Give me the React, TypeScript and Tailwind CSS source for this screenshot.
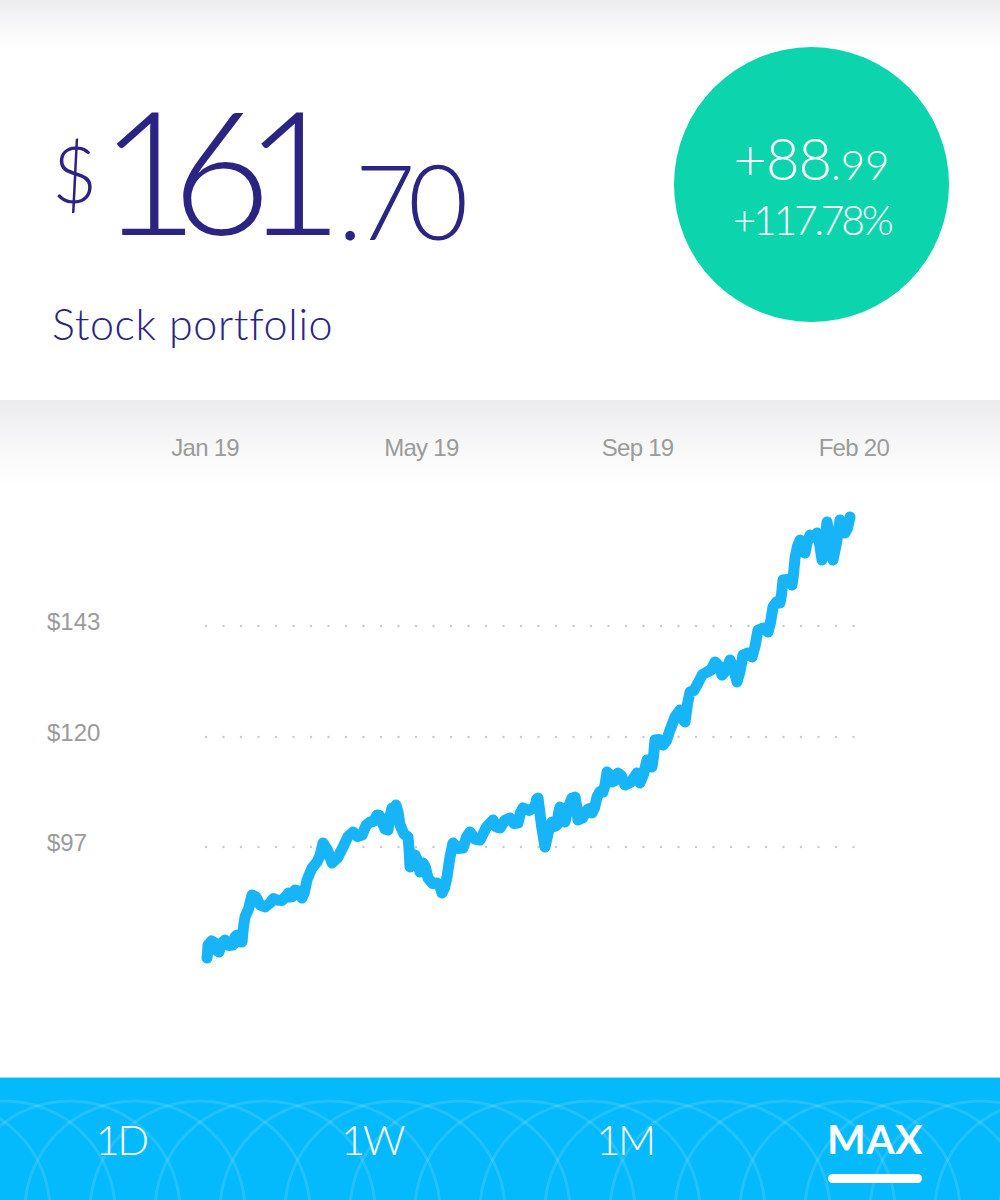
import React from "react";

const pts: [number, number][] = [
  [207, 958], [208, 945], [215, 943], [219, 952], [225, 940], [233, 945], [237, 935], [242, 942],
  [245, 917], [252, 895], [260, 905], [270, 903], [277, 900], [287, 895], [290, 897], [295, 890],
  [302, 898], [307, 880], [317, 862], [323, 843], [332, 863], [343, 847], [353, 832], [362, 835],
  [370, 822], [377, 815], [382, 822], [388, 830], [392, 808], [396, 805], [400, 825], [408, 837],
  [410, 867], [415, 855], [420, 872], [423, 863], [428, 878], [437, 883], [442, 893], [447, 877],
  [453, 843], [463, 848], [470, 832], [480, 840], [493, 820], [500, 828], [510, 818], [518, 823],
  [523, 808], [535, 807], [538, 798], [545, 847], [552, 822], [557, 825], [560, 807], [565, 822],
  [572, 798], [575, 797], [578, 820], [587, 810], [592, 813], [597, 797], [603, 792], [607, 772],
  [612, 782], [618, 773], [625, 785], [637, 773], [640, 783], [647, 760], [652, 767], [655, 740],
  [663, 745], [670, 730], [680, 710], [685, 722], [690, 692], [698, 683], [707, 672], [715, 662],
  [722, 675], [730, 660], [737, 682], [743, 655], [752, 657], [758, 630], [768, 632], [773, 607],
  [780, 603], [783, 580], [792, 585], [795, 558], [800, 540], [805, 553], [810, 535], [817, 533],
  [822, 560], [827, 522], [833, 560], [840, 520], [845, 533], [850, 517],
];

// small deterministic wiggle between traced points so the line looks noisy like the real one
function wiggly() {
  const out: string[] = [];
  pts.forEach(([x, y], i) => {
    out.push(`${x},${y}`);
    const next = pts[i + 1];
    if (!next) return;
    const mx = (x + next[0]) / 2;
    const my = (y + next[1]) / 2 + (i % 2 === 0 ? 3 : -3);
    out.push(`${mx},${my}`);
  });
  return out.join(" ");
}

const dates = ["Jan 19", "May 19", "Sep 19", "Feb 20"];
const levels = [
  { label: "$143", y: 626 },
  { label: "$120", y: 737 },
  { label: "$97", y: 847 },
];
const tabs = ["1D", "1W", "1M", "MAX"];

const geo = { fontFamily: "Lato, 'Open Sans', sans-serif" };
const sys = { fontFamily: "'Liberation Sans', Arial, sans-serif" };

export default function App() {
  return (
    <div className="w-[1000px] h-[1200px] bg-white flex flex-col overflow-hidden" style={geo}>
      {/* header card */}
      <section className="h-[400px] bg-[linear-gradient(to_bottom,#ececef_0px,#f7f7f8_25px,#ffffff_50px)] flex items-start justify-between pl-[52px] pr-[51px] pt-[47px]">
        <div className="flex flex-col">
          <div className="flex items-start text-[#2c2483] mt-[47px]">
            <span className="text-[78px] font-light leading-none mt-[40px] mr-[2px]">$</span>
            <span className="text-[172px] font-light leading-[150px] tracking-[-0.16em]">161</span>
            <span className="text-[104px] font-light leading-none self-end tracking-[-0.07em] mb-[-8px] ml-[22px]">.70</span>
          </div>
          <p className="mt-[58px] text-[43px] font-light text-[#2c2483] leading-none tracking-[0.015em]">Stock portfolio</p>
        </div>
        <div className="w-[275px] h-[275px] rounded-full bg-[#0cd5ae] flex flex-col items-center justify-center text-white">
          <div className="flex items-baseline leading-none">
            <span className="text-[58px] font-light tracking-[-0.02em]">+88</span>
            <span className="text-[42px] font-light">.99</span>
          </div>
          <div className="text-[41px] font-light leading-none mt-[12px] tracking-[-0.08em]">+117.78%</div>
        </div>
      </section>

      {/* chart */}
      <section className="relative h-[677px] bg-[linear-gradient(to_bottom,#ebebee_0px,#f6f6f7_40px,#ffffff_85px)]">
        <div className="grid grid-cols-4 pl-[97px] pr-[38px] pt-[35px]" style={sys}>
          {dates.map((d) => (
            <span key={d} className="text-center text-[24px] leading-[26px] text-[#9b9b9b] tracking-[-0.03em]">
              {d}
            </span>
          ))}
        </div>
        {levels.map((l) => (
          <span
            key={l.label}
            className="absolute left-[47px] text-[24px] leading-none text-[#9b9b9b]"
            style={{ ...sys, top: l.y - 400 - 16 }}
          >
            {l.label}
          </span>
        ))}
        <svg className="absolute inset-0" width="1000" height="677" viewBox="0 400 1000 677">
          {levels.map((l) => (
            <line
              key={l.label}
              x1="206"
              x2="856"
              y1={l.y}
              y2={l.y}
              stroke="#cbcbcb"
              strokeWidth="2.5"
              strokeLinecap="round"
              strokeDasharray="0 17.5"
            />
          ))}
          <polyline
            points={wiggly()}
            fill="none"
            stroke="#17b4f8"
            strokeWidth="11"
            strokeLinejoin="round"
            strokeLinecap="round"
          />
        </svg>
      </section>

      {/* range tabs */}
      <nav className="relative h-[123px] bg-[#04b9fc] border-t border-[#8fdcfb] overflow-hidden">
        <svg className="absolute inset-0" width="1000" height="123" viewBox="0 0 1000 123">
          {Array.from({ length: 20 }).map((_, i) => (
            <circle key={i} cx={i * 65 - 60} cy={133} r={110} fill="none" stroke="#ffffff" strokeOpacity="0.12" strokeWidth="3" />
          ))}
        </svg>
        <div className="relative grid grid-cols-4 h-full text-white">
          {tabs.map((t, i) => (
            <div key={t} className={`flex flex-col items-center pt-[40px] ${i === 0 ? "pr-[8px]" : i === 1 ? "pr-[6px]" : ""}`}>
              <span className={t === "MAX" ? "text-[41px] font-bold leading-none tracking-[0.01em]" : "text-[42px] font-light leading-none tracking-[-0.06em]"}>
                {t}
              </span>
              {t === "MAX" && <span className="mt-[15px] w-[94px] h-[9px] rounded-full bg-white" />}
            </div>
          ))}
        </div>
      </nav>
    </div>
  );
}
